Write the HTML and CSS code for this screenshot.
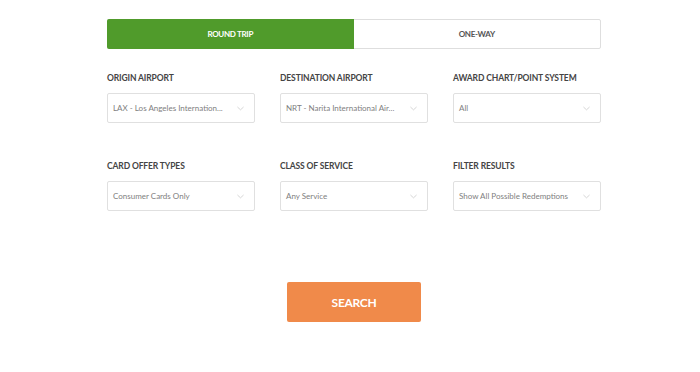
FILE: index.html
```html
<!DOCTYPE html>
<html>
<head>
<meta charset="utf-8">
<link rel="stylesheet" href="styles.css">
</head>
<body>
<div class="wrap">
  <div class="toggle">
    <div class="opt active">ROUND TRIP</div>
    <div class="opt">ONE-WAY</div>
  </div>
  <div class="grid">
    <div class="field">
      <div class="label">ORIGIN AIRPORT</div>
      <div class="select"><span>LAX - Los Angeles Internation...</span><svg class="chev" viewBox="0 0 8 5" width="7" height="5"><path d="M0.5 0.8 L4 4 L7.5 0.8" fill="none" stroke="#c9c9c9" stroke-width="0.9"/></svg></div>
    </div>
    <div class="field">
      <div class="label">DESTINATION AIRPORT</div>
      <div class="select"><span>NRT - Narita International Air...</span><svg class="chev" viewBox="0 0 8 5" width="7" height="5"><path d="M0.5 0.8 L4 4 L7.5 0.8" fill="none" stroke="#c9c9c9" stroke-width="0.9"/></svg></div>
    </div>
    <div class="field">
      <div class="label">AWARD CHART/POINT SYSTEM</div>
      <div class="select"><span>All</span><svg class="chev" viewBox="0 0 8 5" width="7" height="5"><path d="M0.5 0.8 L4 4 L7.5 0.8" fill="none" stroke="#c9c9c9" stroke-width="0.9"/></svg></div>
    </div>
    <div class="field">
      <div class="label">CARD OFFER TYPES</div>
      <div class="select"><span>Consumer Cards Only</span><svg class="chev" viewBox="0 0 8 5" width="7" height="5"><path d="M0.5 0.8 L4 4 L7.5 0.8" fill="none" stroke="#c9c9c9" stroke-width="0.9"/></svg></div>
    </div>
    <div class="field">
      <div class="label">CLASS OF SERVICE</div>
      <div class="select"><span>Any Service</span><svg class="chev" viewBox="0 0 8 5" width="7" height="5"><path d="M0.5 0.8 L4 4 L7.5 0.8" fill="none" stroke="#c9c9c9" stroke-width="0.9"/></svg></div>
    </div>
    <div class="field">
      <div class="label">FILTER RESULTS</div>
      <div class="select"><span>Show All Possible Redemptions</span><svg class="chev" viewBox="0 0 8 5" width="7" height="5"><path d="M0.5 0.8 L4 4 L7.5 0.8" fill="none" stroke="#c9c9c9" stroke-width="0.9"/></svg></div>
    </div>
  </div>
  <div class="actions">
    <div class="search">SEARCH</div>
  </div>
</div>
</body>
</html>
```

FILE: styles.css
```css
html, body {
  margin: 0;
  padding: 0;
  background: #fff;
}
body {
  font-family: Lato, "Open Sans", "Liberation Sans", sans-serif;
}
.wrap {
  width: 494px;
  margin: 19px 0 0 107px;
}
.toggle {
  display: flex;
  height: 30px;
  border: 1px solid #dedede;
  border-radius: 2px;
  box-sizing: border-box;
}
.opt {
  flex: 1;
  display: flex;
  align-items: center;
  justify-content: center;
  font-size: 8px;
  font-weight: 700;
  color: #555;
  letter-spacing: -0.3px;
}
.opt.active {
  background: #509b2b;
  color: #fff;
  margin: -1px 0 -1px -1px;
  border-radius: 2px 0 0 2px;
}
.grid {
  display: grid;
  grid-template-columns: repeat(3, 148px);
  column-gap: 25px;
  row-gap: 38px;
  margin-top: 24px;
}
.label {
  font-size: 8.5px;
  font-weight: 700;
  color: #444;
  letter-spacing: -0.12px;
  height: 11px;
  line-height: 11px;
  margin-bottom: 9px;
}
.select {
  height: 30px;
  box-sizing: border-box;
  border: 1px solid #e0e0e0;
  border-radius: 2px;
  display: flex;
  align-items: center;
  justify-content: space-between;
  padding: 0 10px 0 5px;
  font-size: 8px;
  color: #808080;
}
.chev {
  display: block;
}
.actions {
  display: flex;
  justify-content: center;
  margin-top: 71px;
}
.search {
  width: 134px;
  height: 40px;
  background: #f08a4a;
  border-radius: 2px;
  color: #fff;
  font-size: 12px;
  font-weight: 700;
  display: flex;
  align-items: center;
  justify-content: center;
  letter-spacing: -0.3px;
}
```
